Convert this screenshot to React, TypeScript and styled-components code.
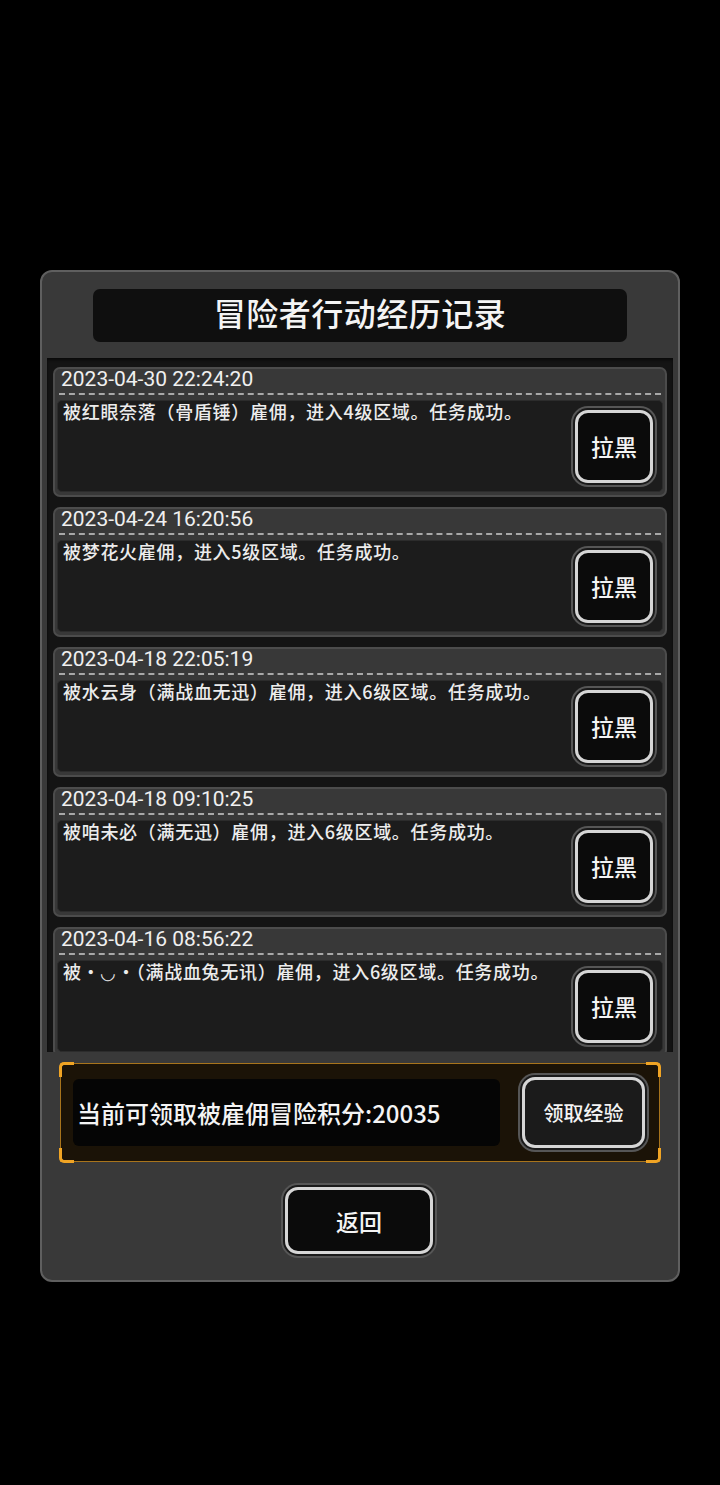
import styled, { createGlobalStyle } from "styled-components";

const records = [
  { time: "2023-04-30 22:24:20", text: "被红眼奈落（骨盾锤）雇佣，进入4级区域。任务成功。" },
  { time: "2023-04-24 16:20:56", text: "被梦花火雇佣，进入5级区域。任务成功。" },
  { time: "2023-04-18 22:05:19", text: "被水云身（满战血无迅）雇佣，进入6级区域。任务成功。" },
  { time: "2023-04-18 09:10:25", text: "被咱未必（满无迅）雇佣，进入6级区域。任务成功。" },
  { time: "2023-04-16 08:56:22", text: "被・◡・（满战血兔无讯）雇佣，进入6级区域。任务成功。" },
];

const GlobalStyle = createGlobalStyle`
  html, body {
    margin: 0;
    padding: 0;
    background: #000;
  }
  body {
    font-family: "Noto Sans CJK SC", "Noto Sans", sans-serif;
    color: #f2f2f2;
  }
`;

const App = () => {
  return (
    <>
      <GlobalStyle />
      <Page>
        <Panel>
          <TitleBar>冒险者行动经历记录</TitleBar>
          <List>
            {records.map((r) => (
              <Card key={r.time}>
                <CardHead>{r.time}</CardHead>
                <CardBody>
                  <CardText>{r.text}</CardText>
                  <RingButton $w={78} $h={73} $size={23}>
                    拉黑
                  </RingButton>
                </CardBody>
              </Card>
            ))}
          </List>
          <Reward>
            <Corner $pos="tl" />
            <Corner $pos="tr" />
            <Corner $pos="bl" />
            <Corner $pos="br" />
            <RewardText>当前可领取被雇佣冒险积分:20035</RewardText>
            <RingButton $w={123} $h={71} $size={20} $bg="#1b1b1b">
              领取经验
            </RingButton>
          </Reward>
          <BackRow>
            <RingButton $w={148} $h={67} $size={23}>
              返回
            </RingButton>
          </BackRow>
        </Panel>
      </Page>
    </>
  );
};

const Page = styled.div`
  height: 1485px;
  padding-top: 270px;
  box-sizing: border-box;
  display: flex;
  justify-content: center;
  align-items: flex-start;
`;

const Panel = styled.div`
  width: 640px;
  height: 1012px;
  box-sizing: border-box;
  background: #393939;
  border: 2px solid #5f5f5f;
  border-radius: 12px;
  display: flex;
  flex-direction: column;
`;

const TitleBar = styled.div`
  margin: 17px auto 0;
  width: 534px;
  height: 53px;
  box-sizing: border-box;
  padding-bottom: 7px;
  background: #0f0f0f;
  border-radius: 7px;
  display: flex;
  align-items: center;
  justify-content: center;
  font-size: 32px;
  font-weight: 500;
  color: #f4f4f4;
  letter-spacing: 0.5px;
`;

const List = styled.div`
  margin: 16px 5px 0;
  height: 694px;
  flex-shrink: 0;
  background: #141414;
  box-shadow: inset 0 2px 3px #0a0a0a;
  padding: 9px 6px 0;
  box-sizing: border-box;
  overflow: hidden;
  display: flex;
  flex-direction: column;
  gap: 10px;
`;

const Card = styled.div`
  flex-shrink: 0;
  height: 130px;
  box-sizing: border-box;
  background: #383838;
  border: 2px solid #4c4c4c;
  border-radius: 7px;
  display: flex;
  flex-direction: column;
  padding: 0 2px 3px;
`;

const CardHead = styled.div`
  height: 24px;
  margin: 0 2px;
  padding-left: 2px;
  border-bottom: 2px dashed #a8a8a8;
  font-family: Roboto, "Noto Sans CJK SC", sans-serif;
  font-size: 21px;
  line-height: 20px;
  color: #f0f0f0;
`;

const CardBody = styled.div`
  flex: 1;
  margin-top: 5px;
  background: #1c1c1c;
  border: 1px solid #2c2c2c;
  border-radius: 5px;
  display: flex;
  justify-content: space-between;
  align-items: center;
  padding: 0 9px 0 5px;
`;

const CardText = styled.div`
  align-self: flex-start;
  font-size: 18px;
  font-weight: 500;
  letter-spacing: 0.7px;
  line-height: 20px;
  color: #ececec;
`;

const RingButton = styled.button<{ $w: number; $h: number; $size: number; $bg?: string }>`
  flex-shrink: 0;
  width: ${(p) => p.$w}px;
  height: ${(p) => p.$h}px;
  box-sizing: border-box;
  background: ${(p) => p.$bg || "#0b0b0b"};
  border: 3px solid #d6d6d6;
  border-radius: 13px;
  box-shadow: 0 0 0 2px #1a1a1a, 0 0 0 4px #565656;
  color: #f4f4f4;
  font-family: "Noto Sans CJK SC", sans-serif;
  font-size: ${(p) => p.$size}px;
  font-weight: 500;
  display: flex;
  align-items: center;
  justify-content: center;
  padding: 0;
`;

const Reward = styled.div`
  position: relative;
  margin: 11px 18px 0;
  height: 99px;
  box-sizing: border-box;
  background: #1b1307;
  border: 1px solid #a8741c;
  border-radius: 3px;
  display: flex;
  align-items: center;
  justify-content: space-between;
  padding: 0 14px 0 12px;
`;

const Corner = styled.span<{ $pos: "tl" | "tr" | "bl" | "br" }>`
  position: absolute;
  width: 12px;
  height: 12px;
  border-color: #f0a424;
  border-style: solid;
  border-width: 0;
  ${(p) => (p.$pos[0] === "t" ? "top: -2px; border-top-width: 3px;" : "bottom: -2px; border-bottom-width: 3px;")}
  ${(p) => (p.$pos[1] === "l" ? "left: -2px; border-left-width: 3px;" : "right: -2px; border-right-width: 3px;")}
  border-radius: ${(p) =>
    ({ tl: "5px 0 0 0", tr: "0 5px 0 0", bl: "0 0 0 5px", br: "0 0 5px 0" })[p.$pos]};
`;

const RewardText = styled.div`
  width: 427px;
  height: 67px;
  box-sizing: border-box;
  background: #050505;
  border-radius: 6px;
  display: flex;
  align-items: center;
  padding-left: 4px;
  font-size: 24px;
  font-weight: 500;
  color: #f4f4f4;
`;

const BackRow = styled.div`
  margin-top: 25px;
  display: flex;
  justify-content: center;
  padding-right: 2px;
`;

export default App;
